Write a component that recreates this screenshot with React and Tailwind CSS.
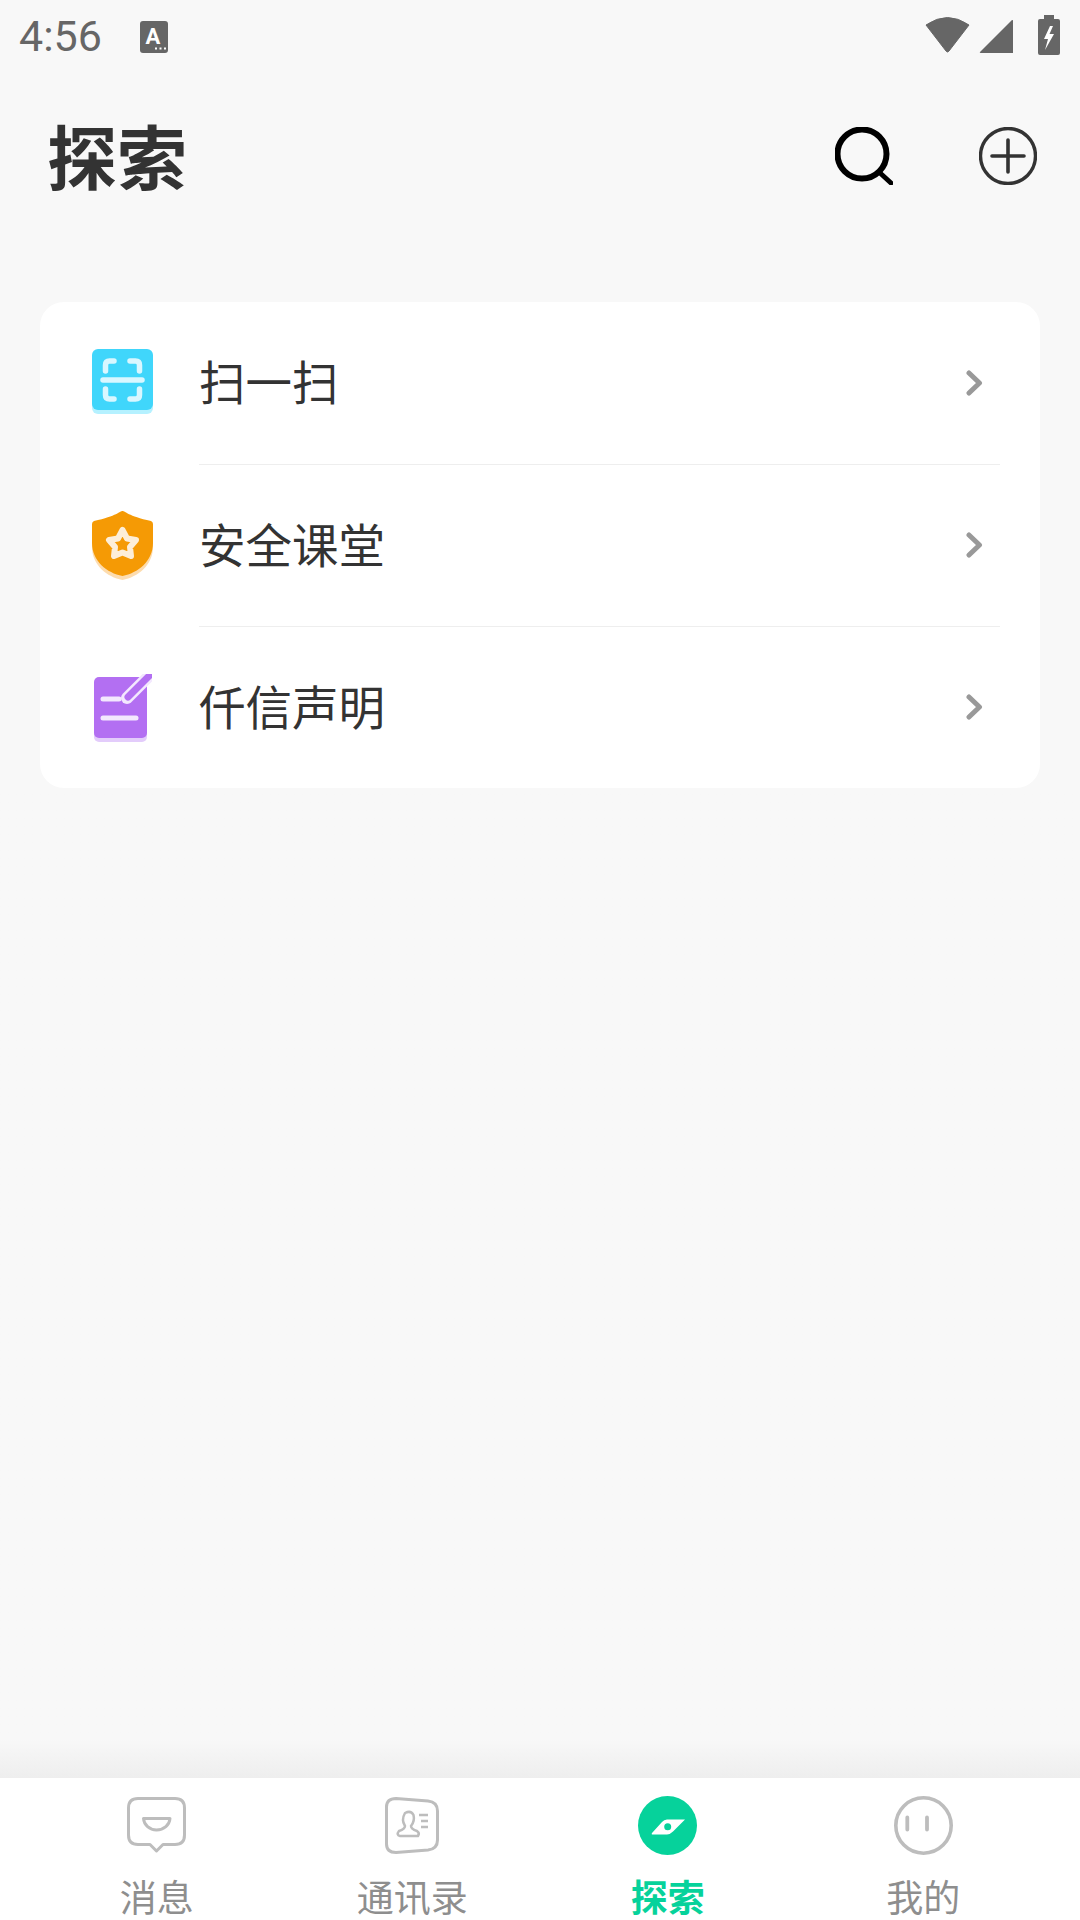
import React from "react";

const CJK = "font-['Roboto','Noto_Sans_CJK_SC',sans-serif]";

function Chevron() {
  return (
    <svg width="17" height="26" viewBox="0 0 17 26" className="shrink-0">
      <path d="M3 3 L13.5 13 L3 23" fill="none" stroke="#999999" strokeWidth="5" strokeLinecap="round" strokeLinejoin="round" />
    </svg>
  );
}

function ScanIcon() {
  return (
    <svg width="61" height="65" viewBox="0 0 61 65" className="-mt-[3px]">
      <rect x="0" y="4" width="61" height="61" rx="6" fill="#b5f1ff" />
      <rect x="0" y="0" width="61" height="61" rx="6" fill="#40d6fb" />
      <g fill="none" stroke="#d9f7ff" strokeWidth="5.5" strokeLinecap="round">
        <path d="M13.5 22 V16 Q13.5 12 17.5 12 H22" />
        <path d="M38 12 H43.5 Q47.5 12 47.5 16 V22" />
        <path d="M13.5 40 V46 Q13.5 50 17.5 50 H22" />
        <path d="M38 50 H43.5 Q47.5 50 47.5 46 V40" />
        <path d="M11 31 H50" />
      </g>
    </svg>
  );
}

function ShieldIcon() {
  const shield = "M30.5 0 C33 0 36 5 59 10 Q61 11 61 13 V32 C61 50 46 62 30.5 65 C15 62 0 50 0 32 V13 Q0 11 2 10 C25 5 28 0 30.5 0 Z";
  return (
    <svg width="61" height="69" viewBox="0 0 61 69">
      <path d={shield} transform="translate(0 4)" fill="#fddcae" />
      <path d={shield} fill="#f59a05" />
      <path d="M30.5 19 L35 27.5 L44 29 L38 36 L39 45 L30.5 41.5 L22 45 L23 36 L17 29 L26 27.5 Z" fill="#f59a05" stroke="#fdeed8" strokeWidth="6" strokeLinejoin="round" />
    </svg>
  );
}

function NoteIcon() {
  return (
    <svg width="58" height="68" viewBox="0 0 58 68">
      <rect x="0" y="7" width="53" height="61" rx="5" fill="#e3ccfb" />
      <rect x="0" y="3" width="53" height="61" rx="5" fill="#b36ff2" />
      <path d="M33 24 L54 3" fill="none" stroke="#f3e8fe" strokeWidth="12" strokeLinecap="round" />
      <path d="M34 23 L55 2" fill="none" stroke="#b36ff2" strokeWidth="7" strokeLinecap="round" />
      <path d="M9 25 H25" stroke="#f3e8fe" strokeWidth="5" strokeLinecap="round" />
      <path d="M9 44 H42" stroke="#f3e8fe" strokeWidth="5" strokeLinecap="round" />
    </svg>
  );
}

function MessageIcon() {
  return (
    <svg width="59" height="56" viewBox="0 0 59 56">
      <path d="M11 1.5 H48 Q57.5 1.5 57.5 11 V38 Q57.5 47.5 48 47.5 H36 L29.5 54 L23 47.5 H11 Q1.5 47.5 1.5 38 V11 Q1.5 1.5 11 1.5 Z" fill="none" stroke="#bdbdbd" strokeWidth="3" strokeLinejoin="round" />
      <path d="M16.5 21.5 H43 C42.5 28 37 33 29.5 33 C22.5 33 17 28 16.5 21.5 Z" fill="none" stroke="#bdbdbd" strokeWidth="3" strokeLinejoin="round" />
    </svg>
  );
}

function ContactsIcon() {
  return (
    <svg width="54" height="57" viewBox="0 0 54 57">
      <path d="M11 1.5 L43 4 Q52.5 5 52.5 14 V43 Q52.5 52 43 53 L11 55.5 Q1.5 55.5 1.5 47 V10 Q1.5 1.5 11 1.5 Z" fill="none" stroke="#bdbdbd" strokeWidth="3" strokeLinejoin="round" />
      <path d="M20 16 Q26 13 28.5 18 Q30 24 26 29 Q26 32 32 34 Q35 36 33 39 H15 Q11 38 14 34 Q20 32 20 29 Q16 23 20 16 Z" fill="none" stroke="#bdbdbd" strokeWidth="2.5" strokeLinejoin="round" />
      <path d="M34 18 H43 M36 24 H43 M36 30 H43" stroke="#bdbdbd" strokeWidth="2.5" />
    </svg>
  );
}

function CompassIcon() {
  return (
    <svg width="59" height="59" viewBox="0 0 59 59">
      <circle cx="29.5" cy="29.5" r="29.5" fill="#06d29b" />
      <path d="M15 38.5 Q13 38.5 14 37 L24 26 Q26 23.5 29 23.5 H47 L35 35.5 Q32 38.5 29 38.5 Z" fill="#ffffff" />
      <circle cx="29.7" cy="30.7" r="3.5" fill="#06d29b" />
    </svg>
  );
}

function FaceIcon() {
  return (
    <svg width="59" height="59" viewBox="0 0 59 59">
      <circle cx="29.5" cy="29.5" r="27.7" fill="none" stroke="#bdbdbd" strokeWidth="3.6" />
      <path d="M13.3 21.5 V33.5 M33 21.5 V33.5" stroke="#bdbdbd" strokeWidth="3.8" strokeLinecap="round" />
    </svg>
  );
}

function Row({ icon, label, first }) {
  return (
    <div className={first ? "h-[162px] flex items-center" : "h-[161px] flex items-center"}>
      <div className="w-[159px] shrink-0 flex justify-center pl-[6px]">{icon}</div>
      <span className="flex-1 text-[46.5px] leading-none text-[#333333] pt-[3px]">{label}</span>
      <div className="pr-[57px] -mt-[1px] flex"><Chevron /></div>
    </div>
  );
}

function Tab({ icon, label, active }) {
  return (
    <div className="flex flex-col items-center">
      <div className="h-[60px] flex items-center justify-center">{icon}</div>
      <span className={active ? "mt-[23px] text-[37px] leading-[43px] font-bold text-[#06d29b]" : "mt-[23px] text-[37px] leading-[43px] text-[#8e8e8e]"}>{label}</span>
    </div>
  );
}

export default function App() {
  return (
    <div className={`w-[1080px] h-[1920px] overflow-hidden bg-[#f8f8f8] flex flex-col ${CJK}`}>
      <div className="h-[70px] shrink-0 flex items-center justify-between pl-[19px] pr-[20px]">
        <div className="flex items-center gap-[38px] pt-[3px]">
          <span className="text-[43px] leading-none text-[#666666] font-['Roboto',sans-serif]">4:56</span>
          <svg width="28" height="32" viewBox="0 0 28 32">
            <rect width="28" height="32" rx="3" fill="#666666" />
            <text x="13" y="23" fontSize="22" fontWeight="700" fill="#ffffff" textAnchor="middle" fontFamily="Roboto">A</text>
            <path d="M15 27.5 H17 M19.5 27.5 H21.5 M24 27.5 H26" stroke="#ffffff" strokeWidth="2.2" />
          </svg>
        </div>
        <div className="flex items-center gap-[9px]">
          <svg width="45" height="37" viewBox="0 0 45 37" className="-mt-[1px]">
            <path d="M1 9 Q22.5 -6 44 9 L24 35 Q22.5 37 21 35 Z" fill="#666666" stroke="#666666" strokeWidth="1" strokeLinejoin="round" />
          </svg>
          <svg width="35" height="36" viewBox="0 0 35 36" className="mt-[1px]">
            <path d="M1 34 L33 2 Q34 1.5 34 3 V35 H2 Q0 35 1 34 Z" fill="#666666" />
          </svg>
          <svg width="22" height="40" viewBox="0 0 22 40" className="ml-[15px] -mt-[1px]">
            <path d="M6 0 H16 V4 H20 Q22 4 22 6 V38 Q22 40 20 40 H2 Q0 40 0 38 V6 Q0 4 2 4 H6 Z" fill="#666666" />
            <path d="M12 11 L6 24 H10 L7 35 L16 19 H11.5 L15 11 Z" fill="#ffffff" />
          </svg>
        </div>
      </div>

      <div className="h-[178px] shrink-0 flex items-center justify-between pl-[47px] pr-[43px]">
        <h1 className="text-[70px] leading-none font-bold text-[#333333] pt-[3px]">探索</h1>
        <div className="flex items-center gap-[86px] pb-[6px]">
          <svg width="58" height="58" viewBox="0 0 58 58">
            <circle cx="27" cy="27" r="24.5" fill="none" stroke="#000000" strokeWidth="6" />
            <path d="M44 45 L56 56" stroke="#000000" strokeWidth="5" strokeLinecap="round" />
          </svg>
          <svg width="58" height="58" viewBox="0 0 58 58">
            <circle cx="29" cy="29" r="27.5" fill="none" stroke="#333333" strokeWidth="3.4" />
            <path d="M13 29 H45 M29 13 V45" stroke="#333333" strokeWidth="3.6" strokeLinecap="round" />
          </svg>
        </div>
      </div>

      <div className="mt-[54px] mx-[40px] bg-white rounded-[24px] flex flex-col">
        <Row first icon={<ScanIcon />} label="扫一扫" />
        <div className="h-px bg-[#eeeeee] ml-[159px] mr-[40px]" />
        <Row icon={<ShieldIcon />} label="安全课堂" />
        <div className="h-px bg-[#eeeeee] ml-[159px] mr-[40px]" />
        <Row icon={<NoteIcon />} label="仟信声明" />
      </div>

      <div className="flex-1 bg-gradient-to-b from-[#f8f8f8] from-[96%] to-[#eeeeee]" />

      <div className="h-[142px] shrink-0 bg-white grid grid-cols-4 px-[29px] pt-[17px]">
        <Tab icon={<MessageIcon />} label="消息" />
        <Tab icon={<ContactsIcon />} label="通讯录" />
        <Tab icon={<CompassIcon />} label="探索" active />
        <Tab icon={<FaceIcon />} label="我的" />
      </div>
    </div>
  );
}
